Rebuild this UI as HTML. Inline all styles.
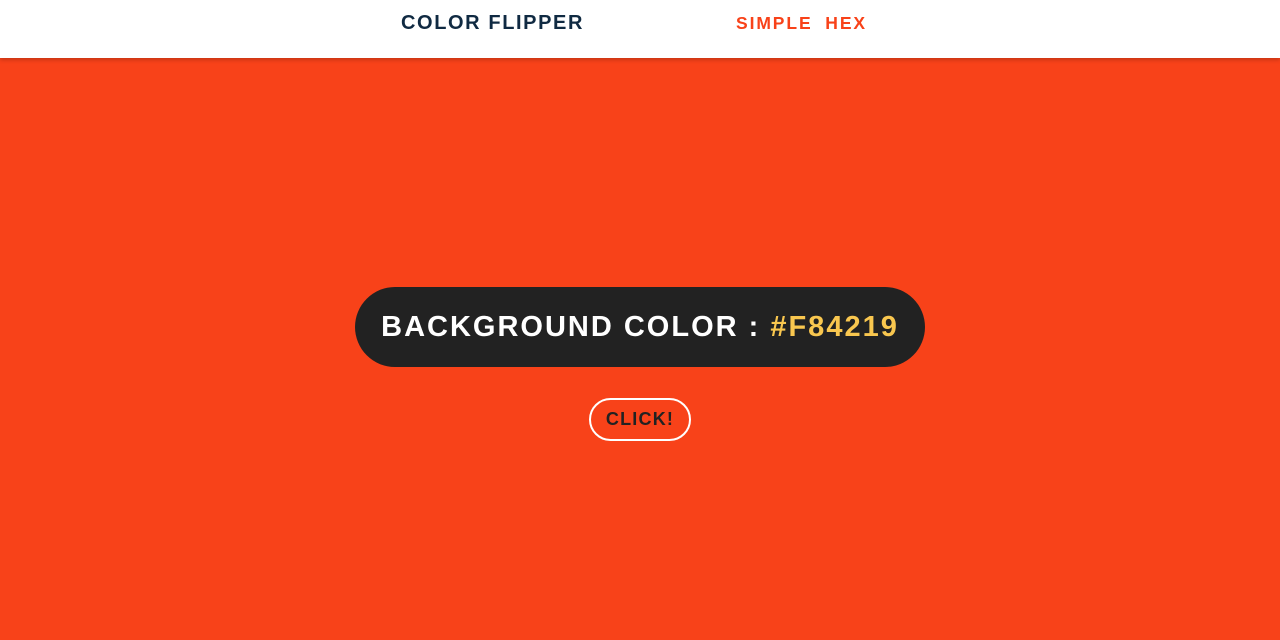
<!DOCTYPE html>
<html><head><style>
*{margin:0;padding:0;box-sizing:border-box}
body{width:1280px;height:640px;overflow:hidden;background:#F84219;font-family:"Liberation Sans",sans-serif;position:relative}
nav{position:absolute;left:0;top:0;width:1280px;height:58px;background:#fff;box-shadow:0 2px 4px rgba(0,0,0,.2)}
.brand{position:absolute;left:401px;top:12px;font-size:20px;font-weight:bold;color:#102a42;letter-spacing:1.6px}
.links{position:absolute;left:736px;top:13px;font-size:17.5px;font-weight:bold;color:#F84219;letter-spacing:1.9px;word-spacing:6px}
.pill{position:absolute;left:355px;top:287px;width:570px;height:80px;background:#222;border-radius:40px;color:#fff;font-size:29px;font-weight:bold;letter-spacing:2px;text-align:center;line-height:80px}
.pill span{color:#f9c74f}
.btn{position:absolute;left:589px;top:398px;width:102px;height:43px;border:2px solid #fff;border-radius:22px;color:#222;font-size:18px;font-weight:bold;letter-spacing:1.2px;text-align:center;line-height:39px}
</style></head><body>
<nav><div class="brand">COLOR FLIPPER</div><div class="links">SIMPLE HEX</div></nav>
<div class="pill">BACKGROUND COLOR : <span>#F84219</span></div>
<div class="btn">CLICK!</div>
</body></html>
